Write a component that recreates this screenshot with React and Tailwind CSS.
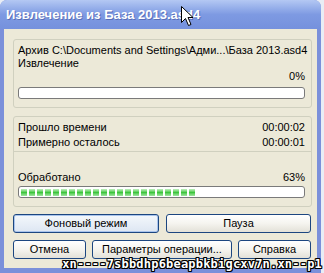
import React from "react";

const font = { fontFamily: '"Liberation Sans", Arial, sans-serif' };

function Bar({ blocks }) {
  return (
    <div className="h-[12px] rounded-[3px] border border-[#7a7a7a] bg-white flex items-center gap-[2px] pl-[2px]">
      {Array.from({ length: blocks }).map((_, i) => (
        <div
          key={i}
          className="w-[6px] h-[7px] bg-gradient-to-b from-[#bff0bf] via-[#3cc63c] to-[#9fe59f]"
        />
      ))}
    </div>
  );
}

function Btn({ children, w, def }) {
  return (
    <div
      className={
        "h-[19px] rounded-[3px] border border-[#1c4680] flex items-center justify-center text-[11px] text-black leading-none " +
        (def
          ? "bg-gradient-to-b from-[#f4f8fc] to-[#dde6f2] shadow-[inset_0_0_0_1px_#a9c4ec]"
          : "bg-gradient-to-b from-[#ffffff] via-[#f5f4ef] to-[#e3e1d8]")
      }
      style={{ width: w }}
    >
      {children}
    </div>
  );
}

export default function App() {
  return (
    <div className="w-[324px] h-[273px] bg-[#e9edf5] relative overflow-hidden" style={font}>
      <div className="w-[321px] h-[273px] bg-[#7b90da] rounded-t-[7px] flex flex-col">
        <div className="h-[29px] rounded-t-[7px] bg-gradient-to-b from-[#b4c8f3] via-[#7e9ae2] to-[#7591dd] flex items-center pl-[6px]">
          <span className="text-white font-bold text-[13px] [text-shadow:1px_1px_0_#5a6fb8]">
            Извлечение из База 2013.asd4
          </span>
        </div>
        <div className="mx-[4px] flex-1 bg-[#ece9d8] pt-[10px] pl-[9px] pr-[5px] text-[11px] text-black">
          <div className="h-[69px] border border-[#d0d0bf] rounded-[3px] pt-[4px] pl-[4px] pr-[6px]">
            <div className="h-[13px] leading-[13px] whitespace-nowrap">
              Архив C:\Documents and Settings\Адми...\База 2013.asd4
            </div>
            <div className="h-[13px] leading-[13px]">Извлечение</div>
            <div className="h-[13px] leading-[13px] text-right">0%</div>
            <div className="mt-[4px]">
              <Bar blocks={0} />
            </div>
          </div>
          <div className="mt-[8px] border border-[#d0d0bf] rounded-[3px] pt-[4px] pl-[4px] pr-[6px] pb-[8px]">
            <div className="h-[13px] leading-[13px] flex justify-between">
              <span>Прошло времени</span>
              <span>00:00:02</span>
            </div>
            <div className="mt-[2px] h-[13px] leading-[13px] flex justify-between">
              <span>Примерно осталось</span>
              <span>00:00:01</span>
            </div>
            <div className="mt-[2px] -ml-[4px] -mr-[6px] h-px bg-[#d0d0bf]" />
            <div className="mt-[19px] h-[13px] leading-[13px] flex justify-between">
              <span>Обработано</span>
              <span>63%</span>
            </div>
            <div className="mt-[2px]">
              <Bar blocks={22} />
            </div>
          </div>
          <div className="mt-[7px] flex gap-[7px]">
            <Btn w={146} def>
              Фоновый режим
            </Btn>
            <Btn w={145}>Пауза</Btn>
          </div>
          <div className="mt-[7px] flex gap-[6px]">
            <Btn w={73}>Отмена</Btn>
            <Btn w={140}>Параметры операции...</Btn>
            <Btn w={73}>Справка</Btn>
          </div>
        </div>
        <div className="h-[5px]" />
      </div>
      <svg
        className="absolute left-[181px] top-[6px]"
        width="13"
        height="21"
        viewBox="0 0 13 21"
      >
        <path
          d="M0.5 0.5 L0.5 16.5 L4.5 12.5 L7.5 19.5 L10 18.5 L7 11.5 L12 11.5 Z"
          fill="white"
          stroke="black"
          strokeWidth="1"
          strokeLinejoin="miter"
        />
      </svg>
      <div
        className="absolute right-[2px] top-[257px] text-white font-bold text-[12px] leading-[14px] tracking-[0.2px] whitespace-nowrap [text-shadow:1px_0_0_#000,-1px_0_0_#000,0_1px_0_#000,0_-1px_0_#000,1px_1px_0_#000,-1px_-1px_0_#000,1px_-1px_0_#000,-1px_1px_0_#000]"
        style={{ fontFamily: '"DejaVu Sans Mono", monospace' }}
      >
        xn----7sbbdhp6beapbkbigcxv7n.xn--p1
      </div>
    </div>
  );
}
